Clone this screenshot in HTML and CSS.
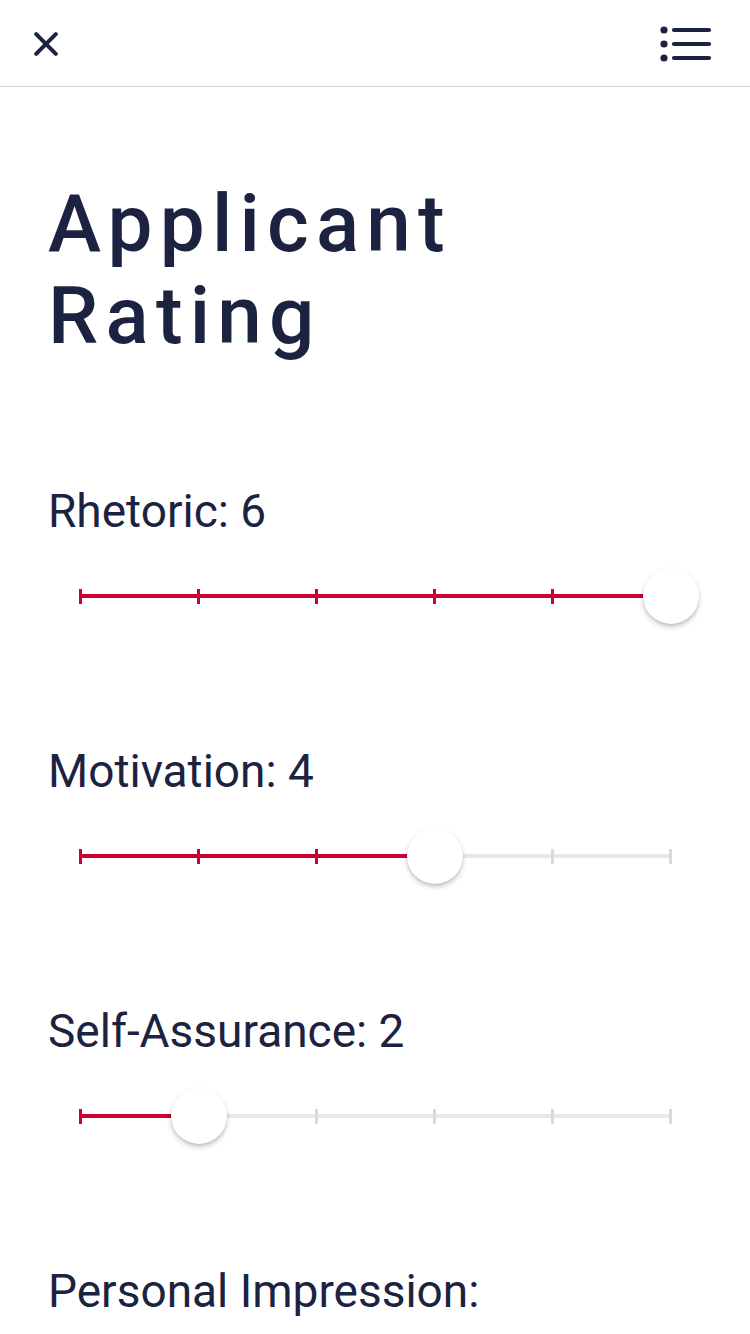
FILE: index.html
```html
<!DOCTYPE html>
<html lang="en">
<head>
<meta charset="utf-8">
<title>Applicant Rating</title>
<link rel="stylesheet" href="styles.css">
</head>
<body>
<header class="topbar">
  <button class="icon-btn close" aria-label="Close">
    <svg width="24" height="24" viewBox="0 0 24 24"><path d="M2.2 2.2 L21.8 21.8 M21.8 2.2 L2.2 21.8" stroke="#1b2340" stroke-width="4" stroke-linecap="round" fill="none"/></svg>
  </button>
  <button class="icon-btn menu" aria-label="Menu">
    <svg width="52" height="36" viewBox="0 0 52 36">
      <circle cx="4" cy="4" r="3.6" fill="#1b2340"/>
      <circle cx="4" cy="18" r="3.6" fill="#1b2340"/>
      <circle cx="4" cy="32" r="3.6" fill="#1b2340"/>
      <path d="M14 4 H49 M14 18 H49 M14 32 H49" stroke="#1b2340" stroke-width="4.2" stroke-linecap="round" fill="none"/>
    </svg>
  </button>
</header>

<main class="content">
  <h1 class="title">Applicant<br>Rating</h1>

  <section class="rating">
    <div class="label">Rhetoric: 6</div>
    <div class="slider">
      <span class="tick on"></span><span class="seg on"></span>
      <span class="tick on"></span><span class="seg on"></span>
      <span class="tick on"></span><span class="seg on"></span>
      <span class="tick on"></span><span class="seg on"></span>
      <span class="tick on"></span><span class="seg on"></span>
      <span class="tick on"></span>
      <span class="thumb" style="left: 563.5px"></span>
    </div>
  </section>

  <section class="rating">
    <div class="label">Motivation: 4</div>
    <div class="slider">
      <span class="tick on"></span><span class="seg on"></span>
      <span class="tick on"></span><span class="seg on"></span>
      <span class="tick on"></span><span class="seg on"></span>
      <span class="tick on"></span><span class="seg"></span>
      <span class="tick"></span><span class="seg"></span>
      <span class="tick"></span>
      <span class="thumb" style="left: 327.5px"></span>
    </div>
  </section>

  <section class="rating">
    <div class="label">Self-Assurance: 2</div>
    <div class="slider">
      <span class="tick on"></span><span class="seg on"></span>
      <span class="tick on"></span><span class="seg"></span>
      <span class="tick"></span><span class="seg"></span>
      <span class="tick"></span><span class="seg"></span>
      <span class="tick"></span><span class="seg"></span>
      <span class="tick"></span>
      <span class="thumb" style="left: 91.5px"></span>
    </div>
  </section>

  <section class="rating">
    <div class="label">Personal Impression:</div>
  </section>
</main>
</body>
</html>
```

FILE: styles.css
```css
html, body {
  margin: 0;
  padding: 0;
  background: #ffffff;
}

body {
  font-family: Roboto, "Noto Sans", "Liberation Sans", sans-serif;
  color: #1b2340;
  width: 750px;
  height: 1334px;
  overflow: hidden;
}

.topbar {
  box-sizing: border-box;
  height: 87px;
  padding: 2px 38px 0 34px;
  border-bottom: 1px solid #d4d4d4;
  display: flex;
  align-items: center;
  justify-content: space-between;
}

.icon-btn {
  background: none;
  border: 0;
  padding: 0;
  margin: 0;
  display: flex;
  align-items: center;
  justify-content: center;
}

.content {
  padding: 0 0 0 48px;
}

.title {
  margin: 91px 0 0 0;
  font-size: 80px;
  line-height: 92px;
  font-weight: 500;
  letter-spacing: 0.09em;
}

.rating {
  margin-top: 121px;
}

.rating + .rating {
  margin-top: 119px;
}

.label {
  font-size: 46px;
  line-height: 56px;
  font-weight: 400;
}

.slider {
  position: relative;
  margin: 29px 0 0 31px;
  width: 593px;
  height: 56px;
  display: flex;
  align-items: center;
}

.tick {
  flex: 0 0 3px;
  height: 15px;
  background: #d9d9d9;
}

.tick.on {
  background: #cc0036;
}

.seg {
  flex: 1 1 0;
  height: 4px;
  background: #e8e8e8;
}

.seg.on {
  background: #cc0036;
}

.thumb {
  position: absolute;
  top: 0;
  width: 56px;
  height: 56px;
  border-radius: 50%;
  background: #ffffff;
  box-shadow: 0 3px 5px rgba(0, 0, 0, 0.22), 0 1px 2px rgba(0, 0, 0, 0.08);
}
```
